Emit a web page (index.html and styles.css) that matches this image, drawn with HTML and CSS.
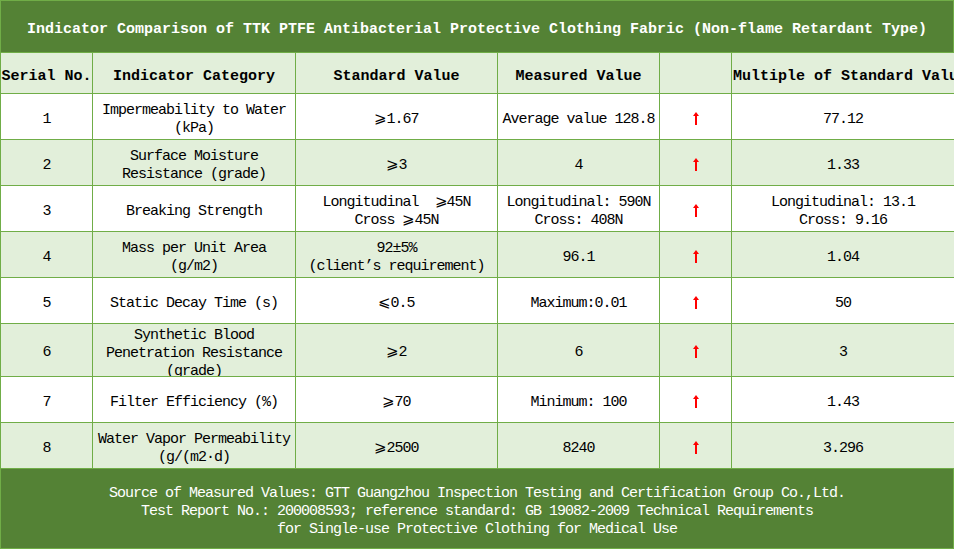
FILE: index.html
```html
<!DOCTYPE html>
<html lang="en">
<head>
<meta charset="utf-8">
<title>Indicator Comparison</title>
<link rel="stylesheet" href="styles.css">
</head>
<body>
<div class="sheet">
  <div class="title">Indicator Comparison of TTK PTFE Antibacterial Protective Clothing Fabric (Non-flame Retardant Type)</div>
  <table class="grid">
    <colgroup>
      <col class="c1"><col class="c2"><col class="c3"><col class="c4"><col class="c5"><col class="c6">
    </colgroup>
    <tr class="head">
      <th>Serial No.</th><th>Indicator Category</th><th>Standard Value</th><th>Measured Value</th><th></th><th class="wide">Multiple of Standard Value</th>
    </tr>
    <tr class="row">
      <td>1</td><td>Impermeability to Water<br>(kPa)</td><td>⩾1.67</td><td>Average value 128.8</td>
      <td><svg class="up" viewBox="0 0 6 13" width="6" height="13"><polygon points="3,0 6,4 4,4 4,13 2,13 2,4 0,4"/></svg></td><td>77.12</td>
    </tr>
    <tr class="row alt">
      <td>2</td><td>Surface Moisture<br>Resistance (grade)</td><td>⩾3</td><td>4</td>
      <td><svg class="up" viewBox="0 0 6 13" width="6" height="13"><polygon points="3,0 6,4 4,4 4,13 2,13 2,4 0,4"/></svg></td><td>1.33</td>
    </tr>
    <tr class="row">
      <td>3</td><td>Breaking Strength</td><td>Longitudinal&nbsp;&nbsp;⩾45N<br>Cross ⩾45N</td><td>Longitudinal: 590N<br>Cross: 408N</td>
      <td><svg class="up" viewBox="0 0 6 13" width="6" height="13"><polygon points="3,0 6,4 4,4 4,13 2,13 2,4 0,4"/></svg></td><td>Longitudinal: 13.1<br>Cross: 9.16</td>
    </tr>
    <tr class="row alt">
      <td>4</td><td>Mass per Unit Area<br>(g/m2)</td><td>92±5%<br>(client’s requirement)</td><td>96.1</td>
      <td><svg class="up" viewBox="0 0 6 13" width="6" height="13"><polygon points="3,0 6,4 4,4 4,13 2,13 2,4 0,4"/></svg></td><td>1.04</td>
    </tr>
    <tr class="row">
      <td>5</td><td>Static Decay Time (s)</td><td>⩽0.5</td><td>Maximum:0.01</td>
      <td><svg class="up" viewBox="0 0 6 13" width="6" height="13"><polygon points="3,0 6,4 4,4 4,13 2,13 2,4 0,4"/></svg></td><td>50</td>
    </tr>
    <tr class="row alt tall">
      <td>6</td><td class="tight"><div class="clip">Synthetic Blood<br>Penetration Resistance<br>(grade)</div></td><td>⩾2</td><td>6</td>
      <td><svg class="up" viewBox="0 0 6 13" width="6" height="13"><polygon points="3,0 6,4 4,4 4,13 2,13 2,4 0,4"/></svg></td><td>3</td>
    </tr>
    <tr class="row">
      <td>7</td><td>Filter Efficiency (%)</td><td>⩾70</td><td>Minimum: 100</td>
      <td><svg class="up" viewBox="0 0 6 13" width="6" height="13"><polygon points="3,0 6,4 4,4 4,13 2,13 2,4 0,4"/></svg></td><td>1.43</td>
    </tr>
    <tr class="row alt">
      <td>8</td><td>Water Vapor Permeability<br>(g/(m2·d)</td><td>⩾2500</td><td>8240</td>
      <td><svg class="up" viewBox="0 0 6 13" width="6" height="13"><polygon points="3,0 6,4 4,4 4,13 2,13 2,4 0,4"/></svg></td><td>3.296</td>
    </tr>
  </table>
  <div class="foot">
    <p>Source of Measured Values: GTT Guangzhou Inspection Testing and Certification Group Co.,Ltd.</p>
    <p>Test Report No.: 200008593; reference standard: GB 19082-2009 Technical Requirements</p>
    <p>for Single-use Protective Clothing for Medical Use</p>
  </div>
</div>
</body>
</html>
```

FILE: styles.css
```css
html, body {
  margin: 0;
  padding: 0;
  background: #ffffff;
}

.sheet {
  width: 954px;
  height: 549px;
  overflow: hidden;
  font-family: "Liberation Mono", "DejaVu Sans Mono", monospace;
  color: #000000;
}

.title {
  box-sizing: border-box;
  width: 954px;
  height: 52px;
  background: #548235;
  border: 1px solid #70ad47;
  border-bottom: none;
  color: #ffffff;
  font-weight: bold;
  font-size: 15px;
  display: flex;
  align-items: center;
  justify-content: center;
  padding-top: 5px;
  white-space: nowrap;
}

.grid {
  border-collapse: collapse;
  table-layout: fixed;
  width: 954px;
}

.c1 { width: 92px; }
.c2 { width: 203px; }
.c3 { width: 202px; }
.c4 { width: 162px; }
.c5 { width: 72px; }
.c6 { width: 223px; }

.grid th,
.grid td {
  border: 1px solid #70ad47;
  padding: 6px 0 0 0;
  text-align: center;
  vertical-align: middle;
  white-space: nowrap;
  overflow: hidden;
}

.grid th {
  background: #e2efda;
  font-size: 15px;
  font-weight: bold;
}

.grid th.wide {
  padding-left: 1px;
}

.grid td {
  font-size: 15px;
  letter-spacing: -1px;
  line-height: 18px;
}

.grid td.tight {
  padding: 0;
}

.head { height: 41px; }
.row { height: 46px; }
.row.tall { height: 53px; }
.row.alt td { background: #e2efda; }

.clip {
  height: 52px;
  overflow: hidden;
  padding-top: 3px;
  box-sizing: border-box;
}

.up {
  display: block;
  margin: -3px auto 0;
  fill: #ff0000;
}

.foot {
  box-sizing: border-box;
  width: 954px;
  height: 80px;
  background: #548235;
  border: 1px solid #70ad47;
  border-top: none;
  color: #ffffff;
  font-size: 15px;
  letter-spacing: -1px;
  line-height: 18px;
  display: flex;
  flex-direction: column;
  align-items: center;
  justify-content: center;
  padding-top: 6px;
}

.foot p {
  margin: 0;
  white-space: nowrap;
}
```
